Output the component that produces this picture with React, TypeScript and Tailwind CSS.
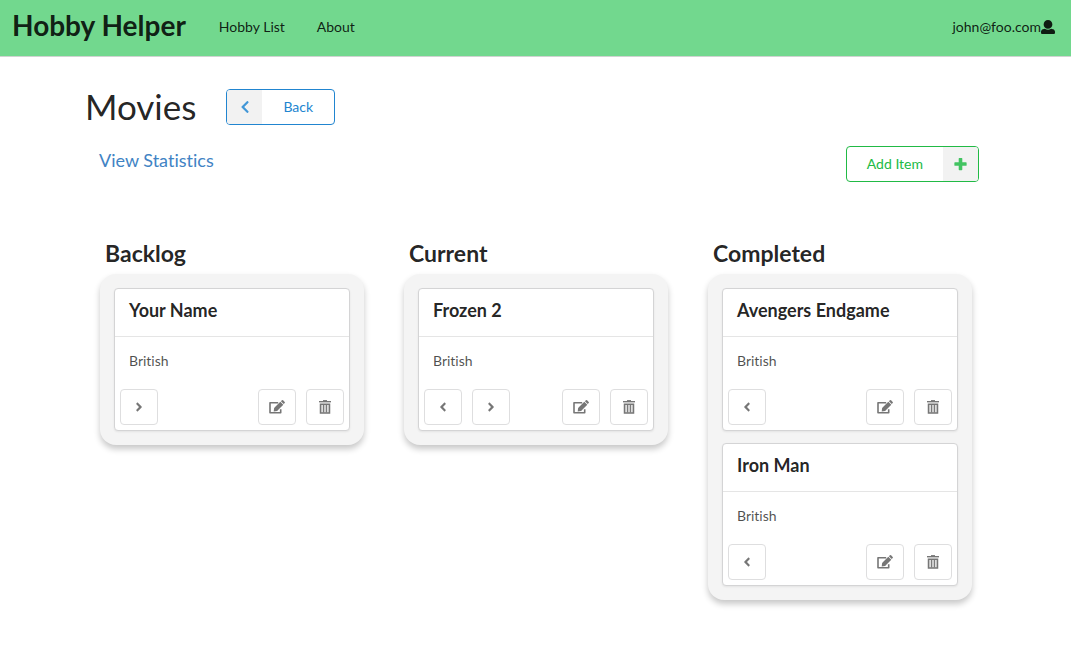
import type { ReactNode } from "react";
import { FaAngleLeft, FaAngleRight, FaChevronLeft } from "react-icons/fa";

type Item = { title: string; genre: string };
type Column = { name: string; items: Item[]; prev: boolean; next: boolean };

const columns: Column[] = [
  { name: "Backlog", prev: false, next: true, items: [{ title: "Your Name", genre: "British" }] },
  { name: "Current", prev: true, next: true, items: [{ title: "Frozen 2", genre: "British" }] },
  {
    name: "Completed",
    prev: true,
    next: false,
    items: [
      { title: "Avengers Endgame", genre: "British" },
      { title: "Iron Man", genre: "British" },
    ],
  },
];

function UserIcon() {
  return (
    <svg viewBox="0 0 512 512" className="h-[14px] w-[14px]" fill="currentColor" aria-hidden="true">
      <path d="M256 0c88.366 0 160 71.634 160 160s-71.634 160-160 160S96 248.366 96 160 167.634 0 256 0zm183.283 333.821l-71.313-17.828c-74.923 53.89-165.738 41.864-223.94 0l-71.313 17.828C29.981 344.505 0 382.903 0 426.955V464c0 26.51 21.49 48 48 48h416c26.51 0 48-21.49 48-48v-37.045c0-44.052-29.981-82.45-72.717-93.134z" />
    </svg>
  );
}

function TrashIcon() {
  return (
    <svg viewBox="0 0 12 14" className="h-[14px] w-3" fill="none" stroke="currentColor" aria-hidden="true">
      <path d="M0 1.7h12" strokeWidth="1.4" />
      <path d="M4 .6h4" strokeWidth="1" />
      <path d="M1.5 4.2h9v8.9h-9z" strokeWidth="1.5" />
      <path d="M4.6 4.5v8M7.4 4.5v8" strokeWidth="1.1" />
      <path d="M2 5h8v8H2z" fill="currentColor" fillOpacity="0.25" stroke="none" />
    </svg>
  );
}

function EditIcon() {
  return (
    <svg viewBox="0 0 16 14" className="h-[14px] w-4" fill="currentColor" aria-hidden="true">
      <path
        d="M9.2 2.7H1v10h10.7V9.2"
        fill="none"
        stroke="currentColor"
        strokeWidth="1.6"
        strokeLinejoin="round"
      />
      <path d="M11.3 1.7 14.3 4.7 8.1 10.9 4.7 11.4 5.1 7.9z" />
      <path d="M11.9 1.3 12.9.3q.6-.5 1.2 0l1.6 1.6q.5.6 0 1.2l-1 1z" />
    </svg>
  );
}

function PlusIcon() {
  return (
    <svg viewBox="0 0 448 512" className="h-[14px] w-[13px] text-[#42c361]" fill="currentColor" aria-hidden="true">
      <path d="M448 298v-84c0-13-11-24-24-24H290V56c0-13-11-24-24-24h-84c-13 0-24 11-24 24v134H24c-13 0-24 11-24 24v84c0 13 11 24 24 24h134v134c0 13 11 24 24 24h84c13 0 24-11 24-24V322h134c13 0 24-11 24-24z" />
    </svg>
  );
}

function IconButton({ label, children }: { label: string; children: ReactNode }) {
  return (
    <button
      type="button"
      aria-label={label}
      className="flex h-9 w-[38px] items-center justify-center rounded border border-[#dededf] bg-white text-sm text-[#767676]"
    >
      {children}
    </button>
  );
}

function ItemCard({ item, prev, next }: { item: Item; prev: boolean; next: boolean }) {
  return (
    <article className="rounded border border-[#d4d4d5] bg-white shadow-[0_1px_2px_0_rgba(34,36,38,0.08)]">
      <h3 className="border-b border-[#e5e5e5] px-[14px] pt-[9px] pb-[14px] text-lg leading-6 font-bold">{item.title}</h3>
      <p className="px-[14px] pt-[14px] pb-[18px] text-sm leading-5 text-black/70">{item.genre}</p>
      <div className="flex gap-[10px] px-[5px] pb-[5px]">
        {prev && (
          <IconButton label="Move back">
            <FaAngleLeft />
          </IconButton>
        )}
        {next && (
          <IconButton label="Move forward">
            <FaAngleRight />
          </IconButton>
        )}
        <div className="ml-auto flex gap-[10px]">
          <IconButton label="Edit">
            <EditIcon />
          </IconButton>
          <IconButton label="Delete">
            <TrashIcon />
          </IconButton>
        </div>
      </div>
    </article>
  );
}

export default function App() {
  return (
    <div className="min-h-screen bg-white font-['Lato',sans-serif] text-sm text-black/87 [font-variant-ligatures:no-common-ligatures]">
      <header className="flex h-[57px] items-center border-b border-[#d0d3d1] bg-[#72d88e] pr-4 pb-[3px] pl-3">
        <a href="#home" className="pb-1 text-[28px] leading-8 font-bold">
          Hobby Helper
        </a>
        <nav className="ml-[33px] flex gap-8">
          <a href="#hobbies">Hobby List</a>
          <a href="#about">About</a>
        </nav>
        <a href="#account" className="ml-auto flex items-center">
          john@foo.com
          <UserIcon />
        </a>
      </header>

      <main className="mx-auto max-w-[901px] pt-8">
        <div className="flex items-center gap-[30px]">
          <h1 className="pb-[2px] text-[35px] leading-[34px]">Movies</h1>
          <button type="button" className="flex h-9 overflow-hidden rounded border border-[#2185d0] text-[#2185d0]">
            <span className="flex h-full w-[35px] items-center justify-center bg-[#f2f2f2]">
              <FaChevronLeft className="text-[#4297d7]" />
            </span>
            <span className="flex h-full items-center px-[21px]">Back</span>
          </button>
        </div>

        <div className="flex items-start justify-between pt-[21px] pr-[7px] pl-[14px]">
          <a href="#statistics" className="text-lg leading-7 text-[#4183c4]">
            View Statistics
          </a>
          <button type="button" className="flex h-9 overflow-hidden rounded border border-[#21ba45] text-[#21ba45]">
            <span className="flex h-full items-center px-5">Add Item</span>
            <span className="flex h-full w-[35px] items-center justify-center bg-[#f2f2f2]">
              <PlusIcon />
            </span>
          </button>
        </div>

        <div className="grid grid-cols-3 items-start gap-10 pt-[58px] pr-[14px] pl-[15px]">
          {columns.map((column) => (
            <section key={column.name}>
              <h2 className="pl-[5px] text-[23px] leading-[26px] font-bold">{column.name}</h2>
              <div className="mt-2 flex flex-col gap-3 rounded-2xl bg-[#f4f4f4] p-[14px] shadow-[0_4px_6px_0_rgba(0,0,0,0.22)]">
                {column.items.map((item) => (
                  <ItemCard key={item.title} item={item} prev={column.prev} next={column.next} />
                ))}
              </div>
            </section>
          ))}
        </div>
      </main>
    </div>
  );
}
